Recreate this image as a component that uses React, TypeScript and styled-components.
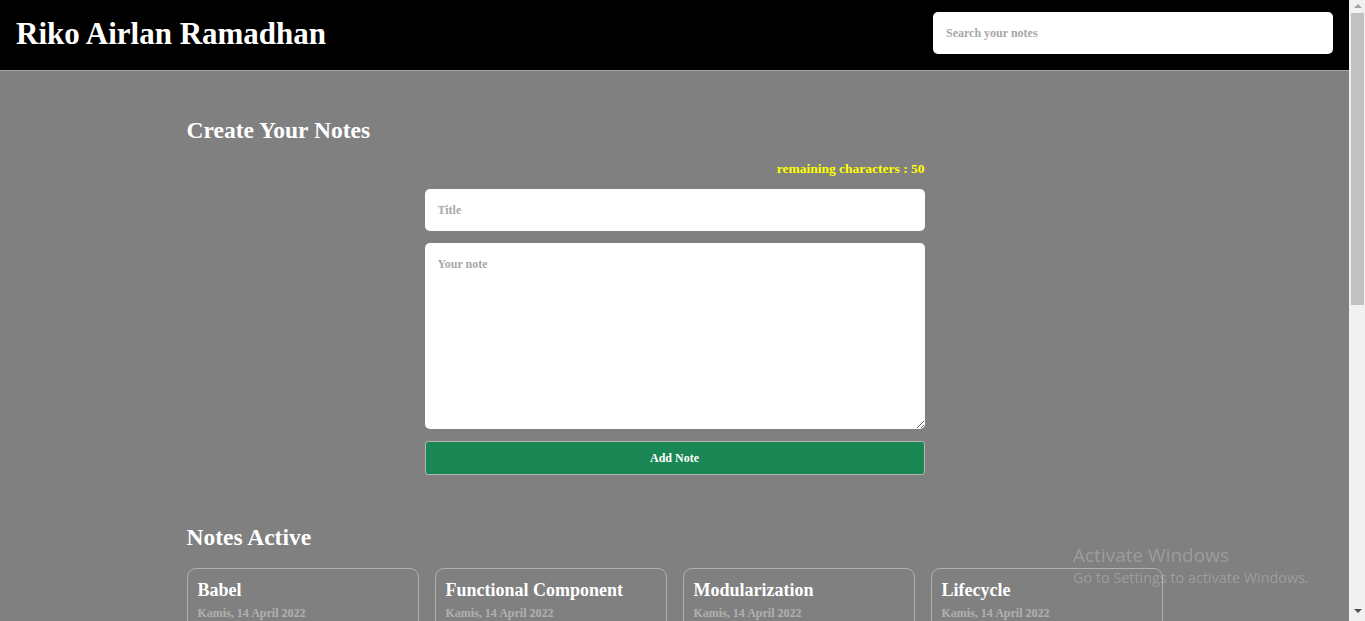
import React, { useState } from "react";
import styled, { createGlobalStyle } from "styled-components";

const Global = createGlobalStyle`
  html, body { margin: 0; padding: 0; height: 100%; overflow: hidden; }
  body { font-family: "Liberation Serif", "Times New Roman", serif; background: #808080; }
  * { box-sizing: border-box; }
`;

const Layout = styled.div`
  display: flex;
  height: 100vh;
`;

const Viewport = styled.div`
  flex: 1;
  min-width: 0;
  overflow-y: auto;
  background: #808080;
  scrollbar-width: none;
  &::-webkit-scrollbar { display: none; }
`;

const Rail = styled.div`
  width: 16px;
  flex: none;
  background: #f1f1f1;
  display: flex;
  flex-direction: column;
  align-items: center;
  padding: 0 1px 0 2px;
`;

const RailArrow = styled.div<{ dir: "up" | "down" }>`
  width: 0;
  height: 0;
  border-left: 4px solid transparent;
  border-right: 4px solid transparent;
  ${(p) =>
    p.dir === "up"
      ? "border-bottom: 4px solid #a3a3a3; margin: 4px 0 5px;"
      : "border-top: 4px solid #505050; margin: auto 0 8px;"}
`;

const Thumb = styled.div`
  width: 13px;
  height: 292px;
  background: #c1c1c1;
`;

const Header = styled.header`
  height: 71px;
  background: #000;
  border-bottom: 1px solid #a6a6a6;
  display: flex;
  align-items: center;
  justify-content: space-between;
  padding: 0 16px 0 16px;
`;

const Brand = styled.h1`
  margin: 0;
  color: #fff;
  font-size: 31px;
  line-height: 36px;
  font-weight: 700;
  margin-top: -2px;
`;

const SearchInput = styled.input`
  width: 400px;
  height: 42px;
  border: none;
  border-radius: 5px;
  padding: 0 13px;
  font-family: inherit;
  font-weight: 700;
  font-size: 12px;
  outline: none;
  margin-top: -4px;
  &::placeholder { color: #a8a8a8; }
`;

const Main = styled.main`
  width: 976px;
  margin: 0 auto;
  padding: 45px 0 60px;
`;

const SectionTitle = styled.h2`
  margin: 0;
  color: #fff;
  font-size: 23.5px;
  line-height: 28px;
  font-weight: 700;
`;

const FormWrap = styled.form`
  width: 500px;
  margin: 16px auto 0;
  display: flex;
  flex-direction: column;
  gap: 12px;
`;

const Counter = styled.p`
  margin: 0;
  padding-top: 1px;
  text-align: right;
  color: #ffff00;
  font-size: 13.5px;
  line-height: 16px;
  font-weight: 700;
`;

const Field = styled.input`
  height: 42px;
  border: none;
  border-radius: 5px;
  padding: 0 13px;
  font-family: inherit;
  font-weight: 700;
  font-size: 12px;
  outline: none;
  &::placeholder { color: #a8a8a8; }
`;

const Area = styled.textarea`
  height: 186px;
  border: none;
  border-radius: 5px;
  padding: 14px 13px;
  font-family: inherit;
  font-weight: 700;
  font-size: 12px;
  outline: none;
  resize: vertical;
  &::placeholder { color: #a8a8a8; }
`;

const AddButton = styled.button`
  height: 34px;
  background: #1b8755;
  border: 1px solid #b4b4b4;
  border-radius: 3px;
  color: #fff;
  font-family: inherit;
  font-weight: 700;
  font-size: 12px;
  cursor: pointer;
`;

const Spacer = styled.div<{ h: number }>`
  height: ${(p) => p.h}px;
`;

const Grid = styled.div`
  display: grid;
  grid-template-columns: repeat(4, 232px);
  gap: 16px;
  margin-top: 17px;
`;

const Card = styled.article`
  border: 1px solid #b0b0b0;
  border-radius: 9px;
  padding: 10px 10px 12px;
  display: flex;
  flex-direction: column;
`;

const CardTitle = styled.h3`
  margin: 0;
  color: #fff;
  font-size: 18px;
  line-height: 22px;
  font-weight: 700;
`;

const CardDate = styled.p`
  margin: 0;
  color: #b0b0b0;
  font-size: 12px;
  line-height: 24px;
  font-weight: 700;
`;

const CardBody = styled.p`
  margin: 8px 0 14px;
  color: #fff;
  font-size: 13px;
  line-height: 18px;
  flex: 1;
`;

const CardActions = styled.div`
  display: flex;
  gap: 8px;
`;

const CardButton = styled.button<{ tone: "danger" | "neutral" }>`
  flex: 1;
  height: 30px;
  border: 1px solid #b4b4b4;
  border-radius: 3px;
  background: ${(p) => (p.tone === "danger" ? "#b33a3a" : "#1b8755")};
  color: #fff;
  font-family: inherit;
  font-weight: 700;
  font-size: 12px;
`;

const Empty = styled.p`
  margin: 17px 0 0;
  color: #ddd;
  font-size: 14px;
  text-align: center;
`;

const Watermark = styled.div`
  position: fixed;
  left: 1073px;
  top: 543px;
  color: rgba(255, 255, 255, 0.22);
  font-family: "Open Sans", "Noto Sans", sans-serif;
  pointer-events: none;
`;

const WmTitle = styled.div`
  font-size: 19px;
  line-height: 24px;
`;

const WmSub = styled.div`
  font-size: 14.4px;
  line-height: 21px;
`;

const notes = [
  { title: "Babel", body: "Babel merupakan tools open-source yang digunakan untuk mengubah sintaks ECMAScript 2015+ menjadi sintaks yang didukung oleh JavaScript engine versi lama." },
  { title: "Functional Component", body: "Functional component merupakan React component yang dibuat menggunakan fungsi JavaScript." },
  { title: "Modularization", body: "Dalam konteks pemrograman JavaScript, modularization merupakan teknik dalam memecah atau menggunakan kode dalam berkas JavaScript secara terpisah berdasarkan tanggung jawabnya masing-masing." },
  { title: "Lifecycle", body: "Dalam konteks React component, lifecycle merupakan kumpulan method yang menjadi siklus hidup mulai dari component dibuat (constructor), dicetak (render), pasca-cetak (componentDidMount), dan sebagainya." },
  { title: "ESM", body: "ESM (ECMAScript Module) merupakan format modularisasi standar JavaScript." },
  { title: "Module Bundler", body: "Dalam konteks pemrograman JavaScript, module bundler merupakan tools yang digunakan untuk menggabungkan seluruh modul JavaScript yang digunakan oleh aplikasi menjadi satu berkas." },
];

export default function App() {
  const [title, setTitle] = useState("");
  const [body, setBody] = useState("");
  return (
    <>
      <Global />
      <Layout>
        <Viewport>
          <Header>
            <Brand>Riko Airlan Ramadhan</Brand>
            <SearchInput placeholder="Search your notes" />
          </Header>
          <Main>
            <SectionTitle>Create Your Notes</SectionTitle>
            <FormWrap onSubmit={(e) => e.preventDefault()}>
              <Counter>remaining characters : {50 - title.length}</Counter>
              <Field
                placeholder="Title"
                value={title}
                maxLength={50}
                onChange={(e) => setTitle(e.target.value)}
              />
              <Area placeholder="Your note" value={body} onChange={(e) => setBody(e.target.value)} />
              <AddButton type="submit">Add Note</AddButton>
            </FormWrap>
            <Spacer h={48} />
            <SectionTitle>Notes Active</SectionTitle>
            <Grid>
              {notes.map((n) => (
                <Card key={n.title}>
                  <CardTitle>{n.title}</CardTitle>
                  <CardDate>Kamis, 14 April 2022</CardDate>
                  <CardBody>{n.body}</CardBody>
                  <CardActions>
                    <CardButton tone="danger">Delete</CardButton>
                    <CardButton tone="neutral">Archive</CardButton>
                  </CardActions>
                </Card>
              ))}
            </Grid>
            <Spacer h={48} />
            <SectionTitle>Notes Archive</SectionTitle>
            <Empty>Tidak ada catatan</Empty>
          </Main>
        </Viewport>
        <Rail>
          <RailArrow dir="up" />
          <Thumb />
          <RailArrow dir="down" />
        </Rail>
      </Layout>
      <Watermark>
        <WmTitle>Activate Windows</WmTitle>
        <WmSub>Go to Settings to activate Windows.</WmSub>
      </Watermark>
    </>
  );
}
